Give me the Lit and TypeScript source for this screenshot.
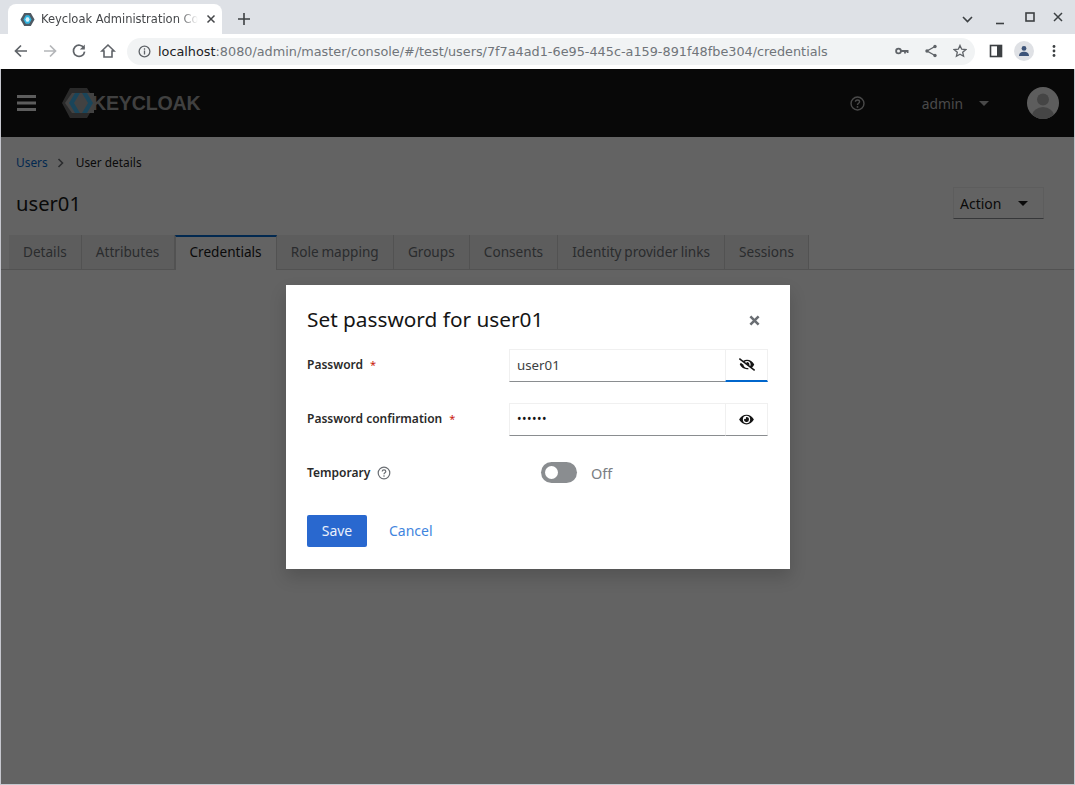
import { LitElement, css, html, svg } from "lit";
import { customElement } from "lit/decorators.js";

const TABS = [
  "Details",
  "Attributes",
  "Credentials",
  "Role mapping",
  "Groups",
  "Consents",
  "Identity provider links",
  "Sessions",
];

const EYE = svg`<path d="M572.52 241.4C518.29 135.59 410.93 64 288 64S57.68 135.64 3.48 241.41a32.35 32.35 0 0 0 0 29.19C57.71 376.41 165.07 448 288 448s230.32-71.64 284.52-177.41a32.35 32.35 0 0 0 0-29.19zM288 400a144 144 0 1 1 144-144 143.93 143.93 0 0 1-144 144zm0-240a95.31 95.31 0 0 0-25.31 3.79 47.85 47.85 0 0 1-66.9 66.9A95.78 95.78 0 1 0 288 160z"/>`;
const EYE_SLASH = svg`<path d="M320 400c-75.85 0-137.25-58.71-142.9-133.11L72.2 185.82c-13.79 17.3-26.48 35.59-36.72 55.59a32.35 32.35 0 0 0 0 29.19C89.71 376.41 197.07 448 320 448c26.91 0 52.87-4 77.89-10.46L346 397.39a144.13 144.13 0 0 1-26 2.61zm313.82 58.1l-110.55-85.44a331.25 331.25 0 0 0 81.25-102.07 32.35 32.35 0 0 0 0-29.19C550.29 135.59 442.93 64 320 64a308.15 308.15 0 0 0-147.32 37.7L45.46 3.37A16 16 0 0 0 23 6.18L3.37 31.45A16 16 0 0 0 6.18 53.9l588.36 454.73a16 16 0 0 0 22.46-2.81l19.64-25.27a16 16 0 0 0-2.82-22.45zm-183.72-142l-39.3-30.38A94.75 94.75 0 0 0 416 256a94.76 94.76 0 0 0-121.31-92.21A47.65 47.65 0 0 1 304 192a46.64 46.64 0 0 1-1.54 10l-73.61-56.89A142.31 142.31 0 0 1 320 112a143.92 143.92 0 0 1 144 144c0 21.63-5.29 41.79-13.9 60.11z"/>`;

@customElement("app-root")
export class AppRoot extends LitElement {
  static styles = css`
    :host {
      display: block;
      height: 785px;
      font-family: "Noto Sans", sans-serif;
      color: #151515;
    }
    .window {
      display: flex;
      flex-direction: column;
      height: 100%;
      background: #c6c7ce;
    }
    svg {
      display: block;
      flex: none;
    }

    /* browser chrome */
    .tabstrip {
      display: flex;
      align-items: flex-end;
      height: 34px;
      flex: none;
      padding-left: 8px;
      background: #dee1e6;
      box-sizing: border-box;
    }
    .browser-tab {
      display: flex;
      align-items: center;
      width: 214px;
      height: 30px;
      box-sizing: border-box;
      padding: 0 6px 0 12px;
      background: #fff;
      border-radius: 8px 8px 0 0;
      font: 11.5px "DejaVu Sans", sans-serif;
      color: #45474a;
    }
    .browser-tab span {
      flex: 1;
      margin: 0 8px 0 6px;
      white-space: nowrap;
      overflow: hidden;
      -webkit-mask-image: linear-gradient(90deg, #000 88%, transparent 100%);
      mask-image: linear-gradient(90deg, #000 88%, transparent 100%);
    }
    .new-tab {
      margin: 0 0 9px 16px;
    }
    .window-controls {
      display: flex;
      align-items: center;
      gap: 14px;
      margin: 0 12px 7px auto;
      align-self: flex-end;
    }
    .toolbar {
      display: flex;
      align-items: center;
      height: 35px;
      flex: none;
      box-sizing: border-box;
      padding: 0 13px 1px 13px;
      background: #fff;
      gap: 13px;
    }
    .omnibox {
      display: flex;
      align-items: center;
      flex: none;
      width: 848px;
      height: 27px;
      margin-left: -2px;
      padding: 0 8px 0 11px;
      box-sizing: border-box;
      border-radius: 14px;
      background: #f1f3f4;
      font: 12.82px "DejaVu Sans", sans-serif;
      color: #70757a;
    }
    .url {
      flex: 1;
      margin-left: 7px;
      white-space: nowrap;
    }
    .url b {
      font-weight: 400;
      color: #202124;
    }
    .omni-actions {
      display: flex;
      align-items: center;
      gap: 15px;
    }
    .toolbar-end {
      display: flex;
      align-items: center;
      gap: 11px;
      margin-left: 1px;
    }
    .profile {
      display: flex;
      align-items: center;
      justify-content: center;
      width: 20px;
      height: 20px;
      border-radius: 50%;
      background: #dfe1e5;
    }

    /* keycloak page */
    .frame {
      position: relative;
      display: flex;
      flex-direction: column;
      flex: 1;
      margin: 0 1px 1px;
      min-height: 0;
      background: #fff;
    }
    .masthead {
      display: flex;
      align-items: center;
      height: 68px;
      flex: none;
      padding: 0 15px 0 16px;
      background: #101010;
      color: #bcbcbc;
    }
    .logo {
      display: flex;
      align-items: center;
      margin-left: 25px;
    }
    .logo-word {
      margin-left: -7px;
      font: 700 19.6px "Liberation Sans", sans-serif;
      letter-spacing: -0.2px;
      color: #a4a4a4;
    }
    .help {
      margin-left: auto;
    }
    .admin {
      margin-left: 57px;
      font-size: 13.8px;
    }
    .caret {
      width: 0;
      height: 0;
      border: 5px solid transparent;
      border-top-color: #bcbcbc;
      border-bottom: 0;
      margin-left: 16px;
    }
    .avatar {
      margin-left: 38px;
    }
    .breadcrumb {
      display: flex;
      align-items: center;
      padding: 17px 15px 0;
      font-size: 11.9px;
      line-height: 17px;
    }
    .breadcrumb a {
      color: #06c;
    }
    .breadcrumb svg {
      margin: 0 12px 0 9px;
    }
    .title-row {
      display: flex;
      align-items: center;
      justify-content: space-between;
      padding: 16px 30px 0 15px;
      height: 32px;
    }
    h1 {
      margin: 0;
      font-size: 20.2px;
      font-weight: 400;
    }
    .action {
      display: flex;
      align-items: center;
      justify-content: space-between;
      box-sizing: border-box;
      width: 91px;
      height: 32px;
      padding: 0 15px 0 6px;
      border: 1px solid #f0f0f0;
      border-bottom-color: #8a8d90;
      font-size: 14px;
    }
    .action i {
      width: 0;
      height: 0;
      border: 5px solid transparent;
      border-top-color: #151515;
      border-bottom: 0;
    }
    .tabs {
      display: flex;
      margin-top: 16px;
      padding-left: 8px;
      border-bottom: 1px solid #d2d2d2;
    }
    .tab {
      box-sizing: border-box;
      height: 34px;
      padding: 7px 14.2px 0 14px;
      background: #f0f0f0;
      border-right: 1px solid #d2d2d2;
      font-size: 13.6px;
      word-spacing: -0.8px;
      line-height: 19px;
      color: #6a6e73;
      white-space: nowrap;
    }
    .tab.active {
      height: 35px;
      margin-bottom: -1px;
      background: #fff;
      color: #151515;
      border-top: 2px solid #06c;
      padding-top: 5px;
      border-left: 1px solid #d2d2d2;
    }

    /* modal */
    .backdrop {
      position: absolute;
      inset: 0;
      display: flex;
      align-items: center;
      justify-content: center;
      padding-left: 1px;
      background: rgba(3, 3, 3, 0.62);
    }
    .modal {
      box-sizing: border-box;
      width: 504px;
      height: 284px;
      padding: 21px 21px 0;
      background: #fff;
      box-shadow: 0 8px 16px rgba(3, 3, 3, 0.16);
    }
    .modal-head {
      display: flex;
      align-items: center;
      justify-content: space-between;
      height: 28px;
      padding: 1px 9px 0 0;
    }
    h2 {
      margin: -3px 0 0;
      font-size: 20.8px;
      font-weight: 400;
      line-height: 28px;
    }
    .form {
      display: grid;
      grid-template-columns: 202px 259px;
      grid-auto-rows: 32px;
      row-gap: 22px;
      margin-top: 14px;
    }
    .label {
      font-size: 12px;
      font-weight: 600;
      color: #2a2a2a;
      line-height: 32px;
      white-space: nowrap;
    }
    .label em {
      font-style: normal;
      font-size: 11px;
      font-weight: 400;
      color: #c9190b;
      margin-left: 7px;
    }
    .temp {
      display: flex;
      align-items: center;
      gap: 7px;
      line-height: normal;
    }
    .input {
      display: flex;
      box-sizing: border-box;
      height: 33px;
    }
    .field {
      flex: 1;
      box-sizing: border-box;
      padding-left: 7px;
      border: 1px solid #f0f0f0;
      border-bottom-color: #8a8d90;
      border-right: 0;
      font-size: 13.3px;
      line-height: 30px;
      color: #3c3f42;
    }
    .dots {
      font-size: 12px;
      letter-spacing: 0.5px;
      color: #151515;
    }
    .reveal {
      display: flex;
      align-items: center;
      justify-content: center;
      box-sizing: border-box;
      width: 43px;
      border: 1px solid #f0f0f0;
      border-bottom-color: #8a8d90;
    }
    .reveal.focus {
      border-bottom: 2px solid #06c;
    }
    .switch {
      display: flex;
      align-items: center;
      padding-left: 32px;
      font-size: 14.5px;
      font-weight: 400;
      color: #7a7e83;
    }
    .track {
      display: flex;
      align-items: center;
      box-sizing: border-box;
      width: 36px;
      height: 21px;
      padding-left: 4px;
      margin-right: 14px;
      border-radius: 11px;
      background: #8a8d90;
    }
    .knob {
      width: 13px;
      height: 13px;
      border-radius: 50%;
      background: #fff;
    }
    .buttons {
      display: flex;
      align-items: center;
      margin-top: 26px;
      font-size: 14px;
    }
    .save {
      box-sizing: border-box;
      width: 60px;
      height: 32px;
      line-height: 32px;
      text-align: center;
      border-radius: 2px;
      background: #2968cf;
      color: #e9f0fb;
    }
    .cancel {
      margin-left: 22px;
      color: #3f85de;
    }
  `;

  render() {
    return html`
      <div class="window">
        ${this.renderChrome()}
        <div class="frame">
          ${this.renderMasthead()}
          <div class="breadcrumb">
            <a>Users</a>
            <svg width="7" height="10" viewBox="0 0 7 10"><path d="M1.5 1l4 4-4 4" fill="none" stroke="#6a6e73" stroke-width="1.6"/></svg>
            <span>User details</span>
          </div>
          <div class="title-row">
            <h1>user01</h1>
            <div class="action">Action<i></i></div>
          </div>
          <div class="tabs">
            ${TABS.map(
              (t) => html`<div class="tab ${t === "Credentials" ? "active" : ""}">${t}</div>`
            )}
          </div>
          <div class="backdrop">${this.renderModal()}</div>
        </div>
      </div>
    `;
  }

  renderChrome() {
    return html`
      <div class="tabstrip">
        <div class="browser-tab">
          <svg width="15" height="15" viewBox="0 0 16 16">
            <path d="M4.5 1h7L15.5 8l-4 7h-7L.5 8z" fill="#4f5a63"/>
            <path d="M6.2 3.5L3.6 8l2.6 4.5h3.6L12.4 8 9.8 3.5z" fill="#2fb4e0"/>
            <path d="M7 5.5L5.6 8 7 10.5h2L10.4 8 9 5.5z" fill="#d8f1fa"/>
          </svg>
          <span>Keycloak Administration Console</span>
          <svg width="10" height="10" viewBox="0 0 10 10"><path d="M1.5 1.5l7 7m0-7l-7 7" stroke="#45474a" stroke-width="1.5"/></svg>
        </div>
        <svg class="new-tab" width="12" height="12" viewBox="0 0 12 12"><path d="M6 0v12M0 6h12" stroke="#3c4043" stroke-width="1.6"/></svg>
        <div class="window-controls">
          <svg width="11" height="7" viewBox="0 0 11 7"><path d="M1 1l4.5 4.5L10 1" fill="none" stroke="#3c4043" stroke-width="1.6"/></svg>
          <svg style="margin-left:8px" width="10" height="10" viewBox="0 0 10 10"><path d="M1 8.5h8" stroke="#3c4043" stroke-width="1.6"/></svg>
          <svg style="margin-left:6px;margin-bottom:5px" width="10" height="10" viewBox="0 0 10 10"><rect x="1" y="1" width="8" height="8" fill="none" stroke="#3c4043" stroke-width="1.6"/></svg>
          <svg style="margin-left:4px;margin-bottom:5px" width="10" height="10" viewBox="0 0 10 10"><path d="M1 1l8 8m0-8l-8 8" stroke="#3c4043" stroke-width="1.5"/></svg>
        </div>
      </div>
      <div class="toolbar">
        <svg width="16" height="16" viewBox="0 0 16 16"><path d="M14 8H3M8 2.5L2.5 8 8 13.5" fill="none" stroke="#5f6368" stroke-width="1.7"/></svg>
        <svg width="16" height="16" viewBox="0 0 16 16"><path d="M2 8h11M8 2.5L13.5 8 8 13.5" fill="none" stroke="#b4b6b9" stroke-width="1.7"/></svg>
        <svg width="16" height="16" viewBox="0 0 16 16"><path d="M13 5.2A5.6 5.6 0 1 0 13.6 8.6" fill="none" stroke="#5f6368" stroke-width="1.7"/><path d="M13.8 1.6v5h-5z" fill="#5f6368"/></svg>
        <svg width="16" height="16" viewBox="0 0 16 16"><path d="M8 2L1.8 8H4v6h8V8h2.2z" fill="none" stroke="#5f6368" stroke-width="1.6"/></svg>
        <div class="omnibox">
          <svg width="13" height="13" viewBox="0 0 14 14"><circle cx="7" cy="7" r="5.8" fill="none" stroke="#5f6368" stroke-width="1.4"/><path d="M7 6v4.2M7 3.6v1.5" stroke="#5f6368" stroke-width="1.4"/></svg>
          <div class="url"><b>localhost</b>:8080/admin/master/console/#/test/users/7f7a4ad1-6e95-445c-a159-891f48fbe304/credentials</div>
          <div class="omni-actions">
            <svg width="14" height="14" viewBox="0 0 14 14"><circle cx="3.5" cy="7" r="2.4" fill="none" stroke="#5f6368" stroke-width="1.8"/><path d="M6 7h7.5M10 7v2.4M12.6 7v2" stroke="#5f6368" stroke-width="1.8"/></svg>
            <svg width="14" height="14" viewBox="0 0 14 14"><path d="M11 2.5L3 7l8 4.5" fill="none" stroke="#5f6368" stroke-width="1.4"/><circle cx="11" cy="2.5" r="1.7" fill="#5f6368"/><circle cx="3" cy="7" r="1.7" fill="#5f6368"/><circle cx="11" cy="11.5" r="1.7" fill="#5f6368"/></svg>
            <svg width="14" height="14" viewBox="0 0 14 14"><path d="M7 1.4l1.7 3.8 4.1.4-3.1 2.7.9 4L7 10.2l-3.6 2.1.9-4-3.1-2.7 4.1-.4z" fill="none" stroke="#5f6368" stroke-width="1.3"/></svg>
          </div>
        </div>
        <div class="toolbar-end">
          <svg width="14" height="14" viewBox="0 0 14 14"><rect x="1.5" y="1.5" width="11" height="11" fill="none" stroke="#3c4043" stroke-width="1.6"/><rect x="8" y="1.5" width="4.5" height="11" fill="#3c4043"/></svg>
          <div class="profile">
            <svg width="12" height="12" viewBox="0 0 12 12"><circle cx="6" cy="3.4" r="2.4" fill="#3c5378"/><path d="M1 11c0-3 2.4-4.2 5-4.2S11 8 11 11z" fill="#3c5378"/></svg>
          </div>
          <svg style="margin-left:7px" width="4" height="14" viewBox="0 0 4 14"><circle cx="2" cy="2.5" r="1.4" fill="#3c4043"/><circle cx="2" cy="7" r="1.4" fill="#3c4043"/><circle cx="2" cy="11.5" r="1.4" fill="#3c4043"/></svg>
        </div>
      </div>
    `;
  }

  renderMasthead() {
    return html`
      <div class="masthead">
        <svg width="19" height="16" viewBox="0 0 19 16"><path d="M0 1.5h19M0 8h19M0 14.5h19" stroke="#f0f0f0" stroke-width="3"/></svg>
        <div class="logo">
          <svg width="38" height="32" viewBox="0 0 38 32">
            <path d="M9 1h17l9 15-9 15H9L1 16z" fill="#6a6a6a"/>
            <path d="M4 16L11 6h22v20H11z" fill="#a8a8a8"/>
            <path d="M14 6h5l-6 10 6 10h-5L8 16zM21 6h5l6 10-6 10h-5l6-10z" fill="#3fb0e8"/>
          </svg>
          <span class="logo-word">KEYCLOAK</span>
        </div>
        <svg class="help" width="15" height="15" viewBox="0 0 16 16"><circle cx="8" cy="8" r="6.9" fill="none" stroke="#bcbcbc" stroke-width="1.5"/><path d="M5.8 6.2C5.8 4.9 6.8 4.2 8 4.2s2.2.8 2.2 1.9c0 1.7-2.2 1.6-2.2 3.4" fill="none" stroke="#bcbcbc" stroke-width="1.5"/><circle cx="8" cy="11.6" r="1" fill="#bcbcbc"/></svg>
        <span class="admin">admin</span>
        <i class="caret"></i>
        <svg class="avatar" width="32" height="32" viewBox="0 0 32 32">
          <defs><clipPath id="av"><circle cx="16" cy="16" r="16"/></clipPath></defs>
          <circle cx="16" cy="16" r="16" fill="#f0f0f0"/>
          <g clip-path="url(#av)" fill="#b0b0b0"><circle cx="16" cy="12.5" r="6"/><ellipse cx="16" cy="29" rx="11" ry="9"/></g>
        </svg>
      </div>
    `;
  }

  renderModal() {
    return html`
      <div class="modal">
        <div class="modal-head">
          <h2>Set password for user01</h2>
          <svg width="11" height="11" viewBox="0 0 12 12"><path d="M1.5 1.5l9 9m0-9l-9 9" stroke="#6a6e73" stroke-width="2.8"/></svg>
        </div>
        <div class="form">
          <div class="label">Password<em>*</em></div>
          <div class="input">
            <div class="field">user01</div>
            <div class="reveal focus"><svg width="16" height="13" viewBox="0 0 640 512" fill="#151515">${EYE_SLASH}</svg></div>
          </div>
          <div class="label">Password confirmation<em>*</em></div>
          <div class="input">
            <div class="field dots">••••••</div>
            <div class="reveal"><svg width="15" height="13" viewBox="0 0 576 512" fill="#151515">${EYE}</svg></div>
          </div>
          <div class="label temp">
            Temporary
            <svg width="14" height="14" viewBox="0 0 14 14"><circle cx="7" cy="7" r="5.8" fill="none" stroke="#6a6e73" stroke-width="1.2"/><path d="M5.2 5.5C5.2 4.5 6 3.9 7 3.9s1.8.6 1.8 1.5c0 1.4-1.8 1.3-1.8 2.8" fill="none" stroke="#6a6e73" stroke-width="1.2"/><circle cx="7" cy="10" r=".8" fill="#6a6e73"/></svg>
          </div>
          <div class="switch"><div class="track"><div class="knob"></div></div>Off</div>
        </div>
        <div class="buttons">
          <div class="save">Save</div>
          <div class="cancel">Cancel</div>
        </div>
      </div>
    `;
  }
}
